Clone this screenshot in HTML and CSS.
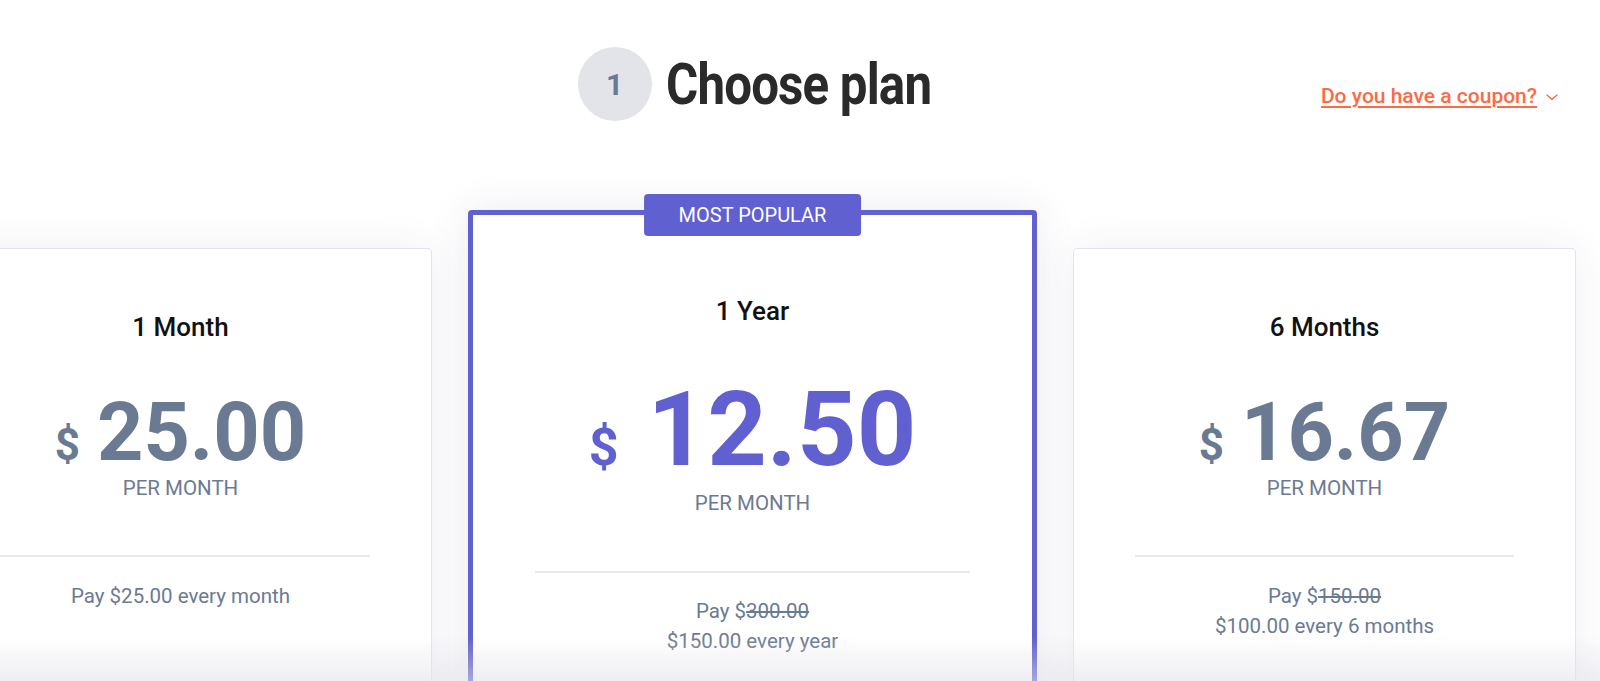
FILE: index.html
```html
<!DOCTYPE html>
<html lang="en">
<head>
<meta charset="utf-8">
<title>Choose plan</title>
<link rel="stylesheet" href="styles.css">
</head>
<body>
<div class="page">
  <header class="header">
    <div class="heading">
      <div class="step">1</div>
      <h1 class="title"><span class="title-text">Choose plan</span></h1>
    </div>
    <div class="coupon">
      <a class="coupon-link" href="#">Do you have a coupon?</a>
      <svg class="chevron" width="12" height="7" viewBox="0 0 12 7" aria-hidden="true"><polyline points="1,1 6,5.5 11,1" fill="none" stroke="#fd6a44" stroke-width="1.4" stroke-linecap="round" stroke-linejoin="round"/></svg>
    </div>
  </header>

  <main class="plans">
    <section class="plan">
      <h2 class="plan-name">1 Month</h2>
      <div class="price"><span class="currency">$</span><span class="amount">25.00</span></div>
      <div class="per">Per month</div>
      <div class="divider"></div>
      <p class="terms">Pay $25.00 every month</p>
    </section>

    <section class="plan plan-featured">
      <div class="badge">MOST POPULAR</div>
      <h2 class="plan-name">1 Year</h2>
      <div class="price"><span class="currency">$</span><span class="amount">12.50</span></div>
      <div class="per">Per month</div>
      <div class="divider"></div>
      <p class="terms">Pay $<s>300.00</s><br>$150.00 every year</p>
    </section>

    <section class="plan">
      <h2 class="plan-name">6 Months</h2>
      <div class="price"><span class="currency">$</span><span class="amount">16.67</span></div>
      <div class="per">Per month</div>
      <div class="divider"></div>
      <p class="terms">Pay $<s>150.00</s><br>$100.00 every 6 months</p>
    </section>
  </main>
</div>
<div class="fade"></div>
</body>
</html>
```

FILE: styles.css
```css
* {
  box-sizing: border-box;
  margin: 0;
  padding: 0;
}

html, body {
  height: 100%;
}

body {
  background: #ffffff;
  font-family: Roboto, "Liberation Sans", Arial, sans-serif;
  color: #6b7a93;
  overflow: hidden;
}

.page {
  margin-left: -71px;
  width: 1647px;
}

/* Header */
.header {
  display: grid;
  grid-template-columns: 1fr auto 1fr;
  align-items: start;
  padding-top: 47px;
}

.heading {
  grid-column: 2;
  display: flex;
  align-items: center;
  gap: 14px;
}

.step {
  width: 74px;
  height: 74px;
  border-radius: 50%;
  background: #e2e4ea;
  color: #6b7a93;
  font-size: 30px;
  font-weight: 700;
  display: flex;
  align-items: center;
  justify-content: center;
}

.title {
  width: 262px;
  height: 74px;
  display: flex;
  align-items: center;
  white-space: nowrap;
  font-weight: 700;
}

.title-text {
  display: inline-block;
  font-size: 58px;
  font-weight: 700;
  color: #2a2a2a;
  letter-spacing: -1px;
  transform: scaleX(0.85);
  transform-origin: left center;
}

.coupon {
  grid-column: 3;
  justify-self: end;
  margin-top: 37px;
  margin-right: 18px;
  display: flex;
  align-items: center;
  gap: 9px;
}

.coupon-link {
  color: #fd6a44;
  font-size: 21px;
  font-weight: 500;
  line-height: 24px;
  text-decoration: underline;
  text-underline-offset: 3px;
  text-decoration-thickness: 1.5px;
}

.chevron {
  display: block;
  margin-top: 2px;
}

/* Plans */
.plans {
  display: flex;
  align-items: flex-start;
  gap: 36px;
  margin-top: 89px;
}

.plan {
  flex: 0 0 503px;
  height: 520px;
  margin-top: 38px;
  padding: 62px 61px 0;
  background: #ffffff;
  border: 1px solid #e3e5ee;
  border-radius: 4px;
  box-shadow: 0 0 40px rgba(50, 50, 110, 0.08);
  text-align: center;
}

.plan-featured {
  position: relative;
  flex-basis: 569px;
  margin-top: 0;
  padding: 80px 62px 0;
  border: 5px solid #6060d0;
  box-shadow: 0 0 40px rgba(50, 50, 110, 0.1);
}

.badge {
  position: absolute;
  top: -21px;
  left: 50%;
  transform: translateX(-50%);
  height: 42px;
  padding: 0 35px;
  background: #6060d0;
  border-radius: 4px;
  color: #ffffff;
  font-size: 20px;
  line-height: 42px;
  white-space: nowrap;
}

.plan-name {
  font-size: 26px;
  font-weight: 500;
  line-height: 32px;
  color: #111111;
}

.price {
  display: flex;
  justify-content: center;
  align-items: baseline;
  margin-top: 50px;
  color: #6b7a93;
  font-weight: 700;
}

.currency {
  font-size: 44px;
  line-height: 1;
  margin-right: 17px;
}

.amount {
  font-size: 81px;
  line-height: 80px;
}

.per {
  margin-top: 3px;
  font-size: 20.5px;
  line-height: 24px;
  text-transform: uppercase;
  color: #6b7a93;
}

.divider {
  height: 2px;
  margin-top: 55px;
  background: #e8e9ee;
}

.terms {
  margin-top: 24px;
  font-size: 20.5px;
  line-height: 30px;
  color: #6b7a93;
}

.terms s {
  text-decoration: line-through;
}

.plan-featured .price {
  margin-top: 55px;
  color: #6060d0;
}

.plan-featured .currency {
  font-size: 52px;
  margin-right: 29px;
}

.plan-featured .amount {
  font-size: 104px;
  line-height: 96px;
}

.plan-featured .per {
  margin-top: 13px;
}

.plan-featured .divider {
  margin-top: 56px;
}

.plan-featured .terms {
  margin-top: 23px;
}

.fade {
  position: fixed;
  left: 0;
  right: 0;
  bottom: 0;
  height: 45px;
  background: linear-gradient(rgba(225, 225, 232, 0), rgba(225, 225, 232, 0.55));
  pointer-events: none;
}
```
